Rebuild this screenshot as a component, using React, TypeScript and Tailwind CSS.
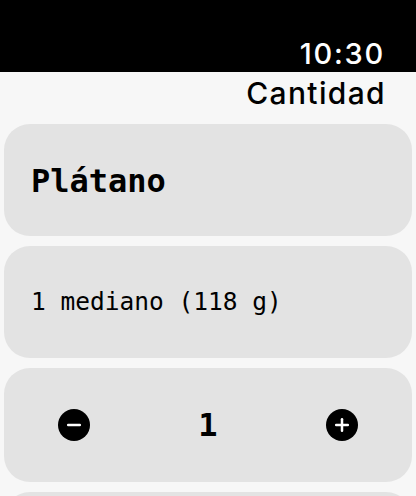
import { Minus, Plus } from "lucide-react";

const mono = { fontFamily: '"DejaVu Sans Mono", "Liberation Mono", monospace' };
const sans = { fontFamily: "Inter, sans-serif" };

function CircleButton({ kind }: { kind: "minus" | "plus" }) {
  const Icon = kind === "minus" ? Minus : Plus;
  return (
    <button className="flex h-8 w-8 items-center justify-center rounded-full bg-black">
      <Icon className="h-5 w-5 text-white" strokeWidth={3} />
    </button>
  );
}

export default function App() {
  return (
    <div className="flex h-[496px] w-[416px] flex-col overflow-hidden bg-[#f7f7f7]">
      <div className="flex h-[72px] shrink-0 items-end justify-end bg-black pb-[4px] pr-[31px]">
        <span className="text-[29px] font-medium leading-none tracking-[0.06em] text-white" style={sans}>
          10:30
        </span>
      </div>
      <div
        className="flex h-[52px] shrink-0 items-start justify-end pr-[30px] pt-[3px] text-[30px] font-medium leading-[36px] tracking-[0.045em] text-black"
        style={sans}
      >
        Cantidad
      </div>
      <div className="flex flex-col gap-[10px] px-1">
        <div className="flex h-[112px] items-center rounded-[26px] bg-[#e3e3e3] px-[27px] pt-[2px]">
          <span className="text-[32px] font-bold text-black" style={mono}>
            Plátano
          </span>
        </div>
        <div className="flex h-[112px] items-center rounded-[26px] bg-[#e3e3e3] px-[27px]">
          <span className="text-[24.5px] text-black" style={mono}>
            1 mediano (118 g)
          </span>
        </div>
        <div className="flex h-[114px] items-center justify-between rounded-[26px] bg-[#e3e3e3] px-[54px]">
          <CircleButton kind="minus" />
          <span className="text-[32px] font-bold text-black" style={mono}>
            1
          </span>
          <CircleButton kind="plus" />
        </div>
        <div className="h-[112px] rounded-[26px] bg-[#e3e3e3]" />
      </div>
    </div>
  );
}
